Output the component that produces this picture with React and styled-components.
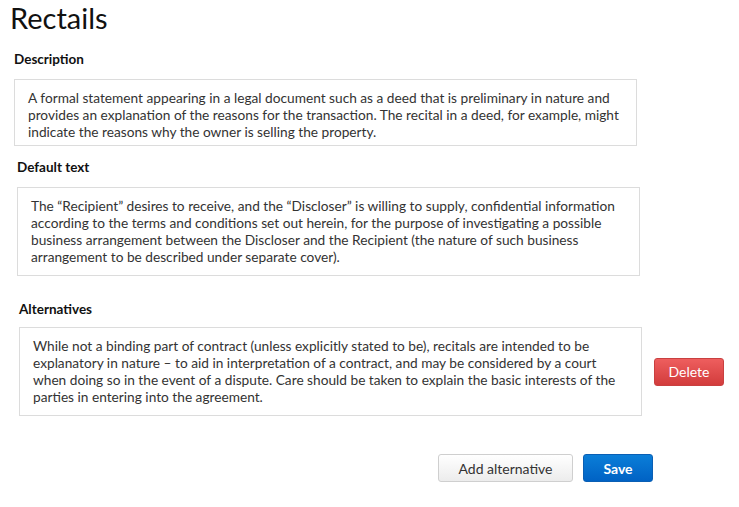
import React from "react";
import styled, { createGlobalStyle } from "styled-components";

const GlobalStyle = createGlobalStyle`
  body {
    margin: 0;
    background: #fff;
    font-family: Lato, "Noto Sans", sans-serif;
    color: #333;
  }
`;

const Page = styled.div`
  width: 739px;
  padding: 0 0 20px 10px;
  box-sizing: border-box;
`;

const Title = styled.h1`
  margin: 0;
  padding-top: 1px;
  font-size: 29px;
  font-weight: 400;
  line-height: 34px;
  color: #111;
`;

const Section = styled.section`
  margin-left: ${(p) => p.$indent || 0}px;
  margin-top: ${(p) => p.$top || 0}px;
`;

const Label = styled.h3`
  margin: 0 0 ${(p) => p.$gap || 11}px;
  font-size: 13.5px;
  font-weight: 700;
  line-height: 17px;
  color: #111;
`;

const Row = styled.div`
  display: flex;
  align-items: center;
  gap: 12px;
`;

const TextBox = styled.div`
  width: ${(p) => p.$width || 623}px;
  height: ${(p) => p.$height}px;
  box-sizing: border-box;
  border: 1px solid #dcdcdc;
  padding: 9px 0 0 13px;
  font-size: 13.7px;
  line-height: 17px;
  color: #333;
  white-space: nowrap;
`;

const Button = styled.button`
  height: 28px;
  width: ${(p) => p.$width || 70}px;
  padding: 0;
  border-radius: 3px;
  font-family: inherit;
  font-size: 14px;
  cursor: pointer;
  color: ${(p) => (p.$variant === "default" ? "#333" : "#fff")};
  font-weight: ${(p) => (p.$variant === "primary" ? 700 : 400)};
  border: 1px solid
    ${(p) =>
      p.$variant === "danger"
        ? "#c94040"
        : p.$variant === "primary"
        ? "#0a5fb4"
        : "#cfcfcf"};
  background: ${(p) =>
    p.$variant === "danger"
      ? "linear-gradient(#ee5e5e, #d23c3c)"
      : p.$variant === "primary"
      ? "linear-gradient(#0b7ed8, #0062c4)"
      : "linear-gradient(#ffffff, #ececec)"};
`;

const Footer = styled.div`
  display: flex;
  justify-content: flex-end;
  gap: 10px;
  width: 643px;
  margin-top: 38px;
`;

export default function App() {
  return (
    <Page>
      <GlobalStyle />
      <Title>Rectails</Title>

      <Section $indent={4} $top={16}>
        <Label>Description</Label>
        <TextBox $height={67}>
          A formal statement appearing in a legal document such as a deed that is preliminary in nature and
          <br />
          provides an explanation of the reasons for the transaction. The recital in a deed, for example, might
          <br />
          indicate the reasons why the owner is selling the property.
        </TextBox>
      </Section>

      <Section $indent={7} $top={13}>
        <Label>Default text</Label>
        <TextBox $height={89}>
          The “Recipient” desires to receive, and the “Discloser” is willing to supply, confidential information
          <br />
          according to the terms and conditions set out herein, for the purpose of investigating a possible
          <br />
          business arrangement between the Discloser and the Recipient (the nature of such business
          <br />
          arrangement to be described under separate cover).
        </TextBox>
      </Section>

      <Section $indent={9} $top={25}>
        <Label $gap={9}>Alternatives</Label>
        <Row>
          <TextBox $height={89} $width={623}>
            While not a binding part of contract (unless explicitly stated to be), recitals are intended to be
            <br />
            explanatory in nature – to aid in interpretation of a contract, and may be considered by a court
            <br />
            when doing so in the event of a dispute. Care should be taken to explain the basic interests of the
            <br />
            parties in entering into the agreement.
          </TextBox>
          <Button $variant="danger">Delete</Button>
        </Row>
      </Section>

      <Footer>
        <Button $variant="default" $width={135}>
          Add alternative
        </Button>
        <Button $variant="primary">Save</Button>
      </Footer>
    </Page>
  );
}
